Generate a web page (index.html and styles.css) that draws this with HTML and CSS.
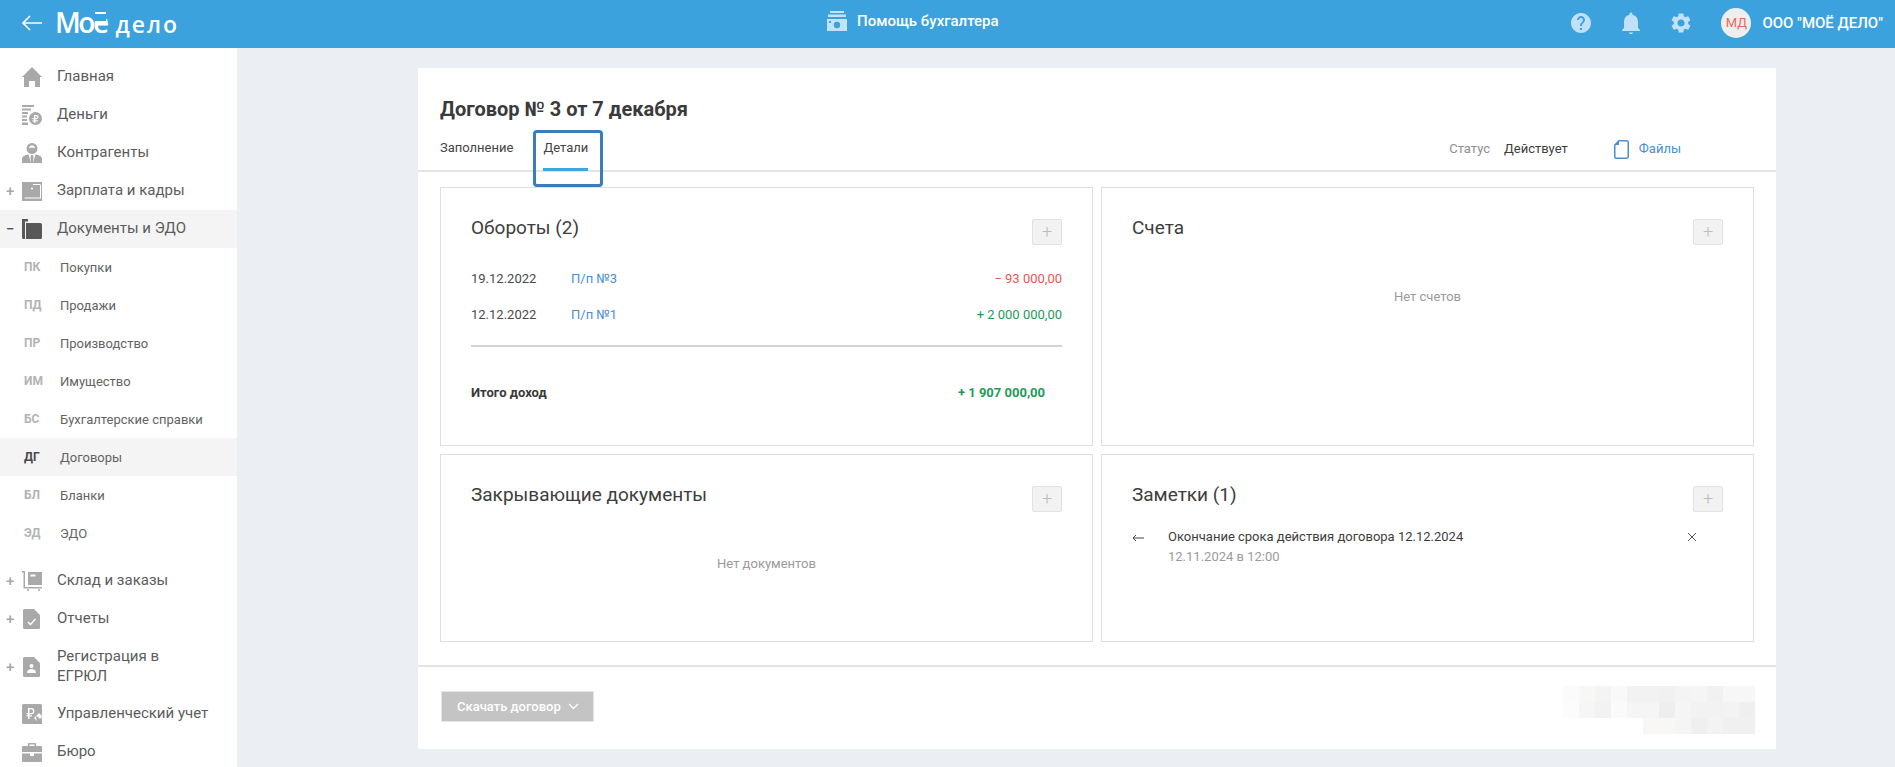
FILE: index.html
```html
<!DOCTYPE html>
<html lang="ru">
<head>
<meta charset="utf-8">
<title>Договор № 3 от 7 декабря</title>
<link rel="stylesheet" href="styles.css">
</head>
<body>
<header class="topbar">
  <div class="brand">
    <svg class="back" viewBox="0 0 20 16"><path d="M8 1 1 8l7 7M1 8h19" fill="none" stroke="#fff" stroke-width="1.6"/></svg>
    <div class="logo"><span class="logo-big">Мо<span class="yo">ё</span></span><span class="logo-small">дело</span></div>
  </div>
  <div class="helper">
    <svg class="helper-icon" viewBox="0 0 20 20"><path d="M3 0h14v2H3zM1 3.500h18V6H1z" fill="#c5e3f7"/><path fill-rule="evenodd" d="M0 8h20v12H0zM10 10.800a3.200 3.200 0 1 0 0 6.400 3.200 3.200 0 0 0 0-6.400zM2 10h2v2H2z" fill="#c5e3f7"/></svg>
    <span>Помощь бухгалтера</span>
  </div>
  <div class="top-right">
    <svg class="top-icon" viewBox="0 0 24 24"><path d="M12 2C6.480 2 2 6.480 2 12s4.480 10 10 10 10-4.480 10-10S17.520 2 12 2zm1 17h-2v-2h2v2zm2.070-7.750l-.9.920C13.450 12.900 13 13.500 13 15h-2v-.5c0-1.100.45-2.100 1.170-2.830l1.240-1.260c.37-.36.59-.86.59-1.410 0-1.100-.9-2-2-2s-2 .9-2 2H8c0-2.210 1.790-4 4-4s4 1.790 4 4c0 .88-.36 1.680-.93 2.250z"/></svg>
    <svg class="top-icon" viewBox="0 0 24 24"><path d="M12 23c1.100 0 2-.4 2-1.500h-4c0 1.100.9 1.500 2 1.500zm7-6v-6c0-3.070-1.630-6.640-5.500-7.320V3c0-.83-.67-1.500-1.500-1.500s-1.500.67-1.500 1.500v.68C6.640 4.360 5 7.920 5 11v6l-2 2v1h18v-1z"/></svg>
    <svg class="top-icon" viewBox="0 0 24 24"><path d="M19.140 12.940c.04-.3.06-.61.06-.94 0-.32-.02-.64-.07-.94l2.030-1.580c.18-.14.23-.41.12-.61l-1.920-3.320c-.12-.22-.37-.29-.59-.22l-2.390.96c-.5-.38-1.030-.7-1.620-.94l-.36-2.540c-.04-.24-.24-.41-.48-.41h-3.840c-.24 0-.43.17-.47.41l-.36 2.540c-.59.24-1.130.57-1.620.94l-2.390-.96c-.22-.08-.47 0-.59.22L2.740 8.870c-.12.21-.08.47.12.61l2.030 1.580c-.05.3-.09.63-.09.94s.02.64.07.94l-2.030 1.580c-.18.14-.23.41-.12.61l1.920 3.320c.12.22.37.29.59.22l2.390-.96c.5.38 1.030.7 1.620.94l.36 2.540c.05.24.24.41.48.41h3.840c.24 0 .44-.17.47-.41l.36-2.540c.59-.24 1.130-.56 1.620-.94l2.390.96c.22.08.47 0 .59-.22l1.920-3.320c.12-.22.07-.47-.12-.61l-2.010-1.580zM12 15.600c-1.980 0-3.600-1.620-3.600-3.600s1.620-3.600 3.600-3.600 3.600 1.620 3.600 3.600-1.620 3.600-3.600 3.600z"/></svg>
    <div class="avatar">МД</div>
    <span class="org">ООО "МОЁ ДЕЛО"</span>
  </div>
</header>

<div class="shell">
  <nav class="sidebar">
    <div class="nav-item"><span class="toggle"></span>
      <svg class="nav-icon" viewBox="0 0 20 20"><path d="M10 0 20 10h-2v10h-5v-6H7v6H2V10H0z"/></svg><span class="nav-label">Главная</span></div>
    <div class="nav-item"><span class="toggle"></span>
      <svg class="nav-icon" viewBox="0 0 20 20"><path d="M0 0h12v2H0zM0 3.500h9v2H0zM0 7h6v2H0zM0 10.500h5v2H0zM0 14h5v2H0zM0 17.500h6V20H0z"/><path fill-rule="evenodd" d="M13.500 7a6.500 6.500 0 1 1 0 13 6.500 6.500 0 0 1 0-13zM12 10v3h-1.500v1.200H12v1h-1.500v1.200H12V18h1.300v-1.600h2.500v-1.200h-2.500v-1h1.200a2.100 2.100 0 0 0 0-4.200zm1.300 1.200h1.200a.9.9 0 0 1 0 1.800h-1.200z"/></svg><span class="nav-label">Деньги</span></div>
    <div class="nav-item"><span class="toggle"></span>
      <svg class="nav-icon" viewBox="0 0 20 20"><path fill-rule="evenodd" d="M10 0a5.500 5.500 0 0 1 5.500 5.500A5.500 5.500 0 0 1 4.500 5.500 5.500 5.500 0 0 1 10 0zM10 2.200a3.300 3.300 0 0 0-3.200 2.600h6.400A3.300 3.300 0 0 0 10 2.200z"/><path d="M0 20v-4c0-2.500 3-4 6.500-4.500L9 20zM20 20v-4c0-2.500-3-4-6.500-4.500L11 20zM9 12h2l.5 2-.5 6H9l-.5-6z"/></svg><span class="nav-label">Контрагенты</span></div>
    <div class="nav-item"><span class="toggle">+</span>
      <svg class="nav-icon" viewBox="0 0 20 20"><path fill-rule="evenodd" d="M0 1h20v19H0zM19 3H11v1h8zM10 6.500a1 1 0 1 0 0 2 1 1 0 0 0 0-2zM18 3.500v13H2.500v1h16.500v-14z"/></svg><span class="nav-label">Зарплата и кадры</span></div>
    <div class="nav-item is-open"><span class="toggle">−</span>
      <svg class="nav-icon" viewBox="0 0 20 20"><path d="M0 0h6v2.500h-3v17.500H1.500A1.500 1.500 0 0 1 0 18.500z"/><path d="M4 4h14.500A1.500 1.500 0 0 1 20 5.500v13a1.500 1.500 0 0 1-1.500 1.500H4z"/></svg><span class="nav-label">Документы и ЭДО</span></div>

    <div class="sub-item"><b>ПК</b><span>Покупки</span></div>
    <div class="sub-item"><b>ПД</b><span>Продажи</span></div>
    <div class="sub-item"><b>ПР</b><span>Производство</span></div>
    <div class="sub-item"><b>ИМ</b><span>Имущество</span></div>
    <div class="sub-item"><b>БС</b><span>Бухгалтерские справки</span></div>
    <div class="sub-item is-active"><b>ДГ</b><span>Договоры</span></div>
    <div class="sub-item"><b>БЛ</b><span>Бланки</span></div>
    <div class="sub-item"><b>ЭД</b><span>ЭДО</span></div>

    <div class="nav-item nav-gap"><span class="toggle">+</span>
      <svg class="nav-icon" viewBox="0 0 20 20"><path d="M0 0h3v16h17v1.500H1.500V1.500H0z"/><path d="M6 1h14v13H6zM8.500 3.500v2h5v-2z" fill-rule="evenodd"/><circle cx="6" cy="19" r="1"/><circle cx="17" cy="19" r="1"/></svg><span class="nav-label">Склад и заказы</span></div>
    <div class="nav-item"><span class="toggle">+</span>
      <svg class="nav-icon" viewBox="0 0 20 20"><path fill-rule="evenodd" d="M2.500 0H12l6 6v12.500a1.500 1.500 0 0 1-1.500 1.500h-14A1.500 1.500 0 0 1 1 18.500v-17A1.500 1.500 0 0 1 2.500 0zM13 9.500l-4.500 5-2-2-1 1 3 3 5.500-6z"/></svg><span class="nav-label">Отчеты</span></div>
    <div class="nav-item nav-tall"><span class="toggle">+</span>
      <svg class="nav-icon" viewBox="0 0 20 20"><path fill-rule="evenodd" d="M2.500 0H12l6 6v12.500a1.500 1.500 0 0 1-1.500 1.500h-14A1.500 1.500 0 0 1 1 18.500v-17A1.500 1.500 0 0 1 2.500 0zM9.500 7a2 2 0 1 0 0 4 2 2 0 0 0 0-4zM5 16c0-3 2-4 4.500-4s4.500 1 4.500 4z"/></svg><span class="nav-label">Регистрация в<br>ЕГРЮЛ</span></div>
    <div class="nav-item"><span class="toggle"></span>
      <svg class="nav-icon" viewBox="0 0 20 20"><path fill-rule="evenodd" d="M1.500 0h17A1.500 1.500 0 0 1 20 1.500v10.500l-3-3-5 5 3 3 3 3H1.500A1.500 1.500 0 0 1 0 18.500v-17A1.500 1.500 0 0 1 1.500 0zM6 4v5H4.500v1.300H6v1H4.500v1.300H6V15h1.500v-2.400H10v-1.300H7.500v-1h1.700a3 3 0 0 0 0-6.300zm1.500 1.300h1.700a1.800 1.800 0 0 1 0 3.700H7.500z"/><path d="m14 13 1-1 3 3 2-2v7h-7l2-2z"/></svg><span class="nav-label">Управленческий учет</span></div>
    <div class="nav-item"><span class="toggle"></span>
      <svg class="nav-icon" viewBox="0 0 20 20"><path fill-rule="evenodd" d="M6 4V2a1 1 0 0 1 1-1h6a1 1 0 0 1 1 1v2h5a1 1 0 0 1 1 1v5H0V5a1 1 0 0 1 1-1zM7.500 4h5V2.500h-5z"/><path d="M0 11.500h8V14h4v-2.500h8V19a1 1 0 0 1-1 1H1a1 1 0 0 1-1-1z"/></svg><span class="nav-label">Бюро</span></div>
  </nav>

  <main class="content">
    <section class="doc">
      <div class="doc-head">
        <h1 class="doc-title">Договор № 3 от 7 декабря</h1>
        <div class="doc-bar">
          <div class="tabs">
            <span class="tab">Заполнение</span>
            <span class="tab tab-active">Детали</span>
          </div>
          <div class="doc-meta">
            <span class="status-label">Статус</span>
            <span class="status-value">Действует</span>
            <span class="files">
              <svg class="files-icon" viewBox="0 0 15 19"><path d="M5 .75h7.500a1.750 1.750 0 0 1 1.750 1.750v14a1.750 1.750 0 0 1-1.750 1.750h-10A1.750 1.750 0 0 1 .75 16.500V5z" fill="none" stroke="#4a8ed2" stroke-width="1.500"/><path d="M5 .75V5H.75z" fill="#4a8ed2"/></svg>
              <span>Файлы</span>
            </span>
          </div>
        </div>
      </div>

      <div class="cards">
        <article class="card card-tall">
          <div class="card-head"><h2>Обороты (2)</h2><span class="add">+</span></div>
          <div class="turn-row"><span class="turn-date">19.12.2022</span><a class="turn-link">П/п №3</a><span class="sum sum-minus">− 93 000,00</span></div>
          <div class="turn-row"><span class="turn-date">12.12.2022</span><a class="turn-link">П/п №1</a><span class="sum sum-plus">+ 2 000 000,00</span></div>
          <div class="turn-total"><b>Итого доход</b><b class="sum-plus">+ 1 907 000,00</b></div>
        </article>
        <article class="card card-tall">
          <div class="card-head"><h2>Счета</h2><span class="add">+</span></div>
          <p class="empty">Нет счетов</p>
        </article>
        <article class="card">
          <div class="card-head"><h2>Закрывающие документы</h2><span class="add">+</span></div>
          <p class="empty">Нет документов</p>
        </article>
        <article class="card">
          <div class="card-head"><h2>Заметки (1)</h2><span class="add">+</span></div>
          <div class="note">
            <svg class="note-arrow" viewBox="0 0 12 8"><path d="M4 1 1 4l3 3M1 4h11" fill="none" stroke="#444" stroke-width="1"/></svg>
            <div class="note-body">
              <div class="note-text">Окончание срока действия договора 12.12.2024</div>
              <div class="note-date">12.11.2024 в 12:00</div>
            </div>
            <svg class="note-close" viewBox="0 0 10 10"><path d="M1 1l8 8M9 1 1 9" stroke="#555" stroke-width="1"/></svg>
          </div>
        </article>
      </div>

      <div class="doc-foot">
        <button class="download"><span>Скачать договор</span>
          <svg class="chev" viewBox="0 0 11 7"><path d="m1 1 4.500 4.500L10 1" fill="none" stroke="#fff" stroke-width="1.300"/></svg>
        </button>
        <svg class="blur" viewBox="0 0 192 48">
          <rect x="0" y="0" width="16" height="16" fill="#fbfbfb"/><rect x="16" y="0" width="16" height="16" fill="#f7f7f5"/><rect x="32" y="0" width="16" height="16" fill="#f4f4f4"/><rect x="48" y="0" width="16" height="16" fill="#f9f9f9"/><rect x="64" y="0" width="32" height="16" fill="#f2f2f2"/><rect x="96" y="0" width="16" height="16" fill="#f1f1f1"/><rect x="112" y="0" width="16" height="16" fill="#f4f4f4"/><rect x="128" y="0" width="16" height="16" fill="#f5f5f5"/><rect x="144" y="0" width="16" height="16" fill="#f1f1f1"/><rect x="160" y="0" width="32" height="16" fill="#f6f7f6"/>
          <rect x="0" y="16" width="16" height="16" fill="#fcfcfc"/><rect x="16" y="16" width="16" height="16" fill="#f6f6f6"/><rect x="32" y="16" width="16" height="16" fill="#f2f2f2"/><rect x="48" y="16" width="16" height="16" fill="#fafafa"/><rect x="64" y="16" width="32" height="16" fill="#f5f5f5"/><rect x="96" y="16" width="16" height="16" fill="#eeeeee"/><rect x="112" y="16" width="16" height="16" fill="#f5f5f5"/><rect x="128" y="16" width="32" height="16" fill="#f2f2f2"/><rect x="160" y="16" width="16" height="16" fill="#f3f3f3"/><rect x="176" y="16" width="16" height="16" fill="#efefef"/>
          <rect x="80" y="32" width="16" height="16" fill="#f8f7f5"/><rect x="96" y="32" width="16" height="16" fill="#f7f7f6"/><rect x="112" y="32" width="16" height="16" fill="#f4f5f4"/><rect x="128" y="32" width="16" height="16" fill="#efefef"/><rect x="144" y="32" width="16" height="16" fill="#f3f3f3"/><rect x="160" y="32" width="16" height="16" fill="#f0f0f0"/><rect x="176" y="32" width="16" height="16" fill="#eff0ef"/>
        </svg>
      </div>
    </section>
  </main>
</div>
</body>
</html>
```

FILE: styles.css
```css
* { box-sizing: border-box; }
html, body { height: 100%; }
body {
  margin: 0;
  height: 767px;
  overflow: hidden;
  background: #ebeff3;
  color: #3a3a3a;
  font-family: Roboto, "Liberation Sans", sans-serif;
  font-size: 14px;
}

/* top bar */
.topbar {
  position: relative;
  display: flex;
  align-items: center;
  justify-content: space-between;
  height: 48px;
  padding-bottom: 2px;
  background: #3ca2de;
  color: #fff;
}
.brand { display: flex; align-items: center; padding-left: 22px; }
.back { width: 20px; height: 16px; margin-right: 13px; }
.logo {
  display: flex;
  align-items: baseline;
  gap: 9px;
  font-family: "Open Sans", Roboto, sans-serif;
  color: #fff;
  white-space: nowrap;
  line-height: 46px;
}
.logo-big { font-size: 28px; font-weight: 600; letter-spacing: -2.500px; }
.logo-small { font-size: 23px; font-weight: 600; letter-spacing: 2px; }
.yo { position: relative; }
.yo::before {
  content: "";
  position: absolute;
  left: 2px;
  right: 1px;
  top: 9px;
  height: 7px;
  border-top: 2px solid #fff;
  border-bottom: 2px solid #fff;
  background: #3ca2de;
}
.helper {
  position: absolute;
  left: 827px;
  top: 10px;
  display: flex;
  align-items: center;
  gap: 10px;
  font-size: 15px;
  font-weight: 500;
  line-height: 22px;
}
.helper-icon { width: 20px; height: 20px; }
.top-right { display: flex; align-items: center; padding-right: 12px; }
.top-icon { width: 24px; height: 24px; fill: #c0e1f7; margin-right: 26px; }
.top-icon:nth-child(3) { margin-right: 28px; }
.avatar {
  width: 30px;
  height: 30px;
  border-radius: 50%;
  background: #eeeeee;
  color: #e96a5c;
  font-size: 13px;
  text-align: center;
  line-height: 30px;
  margin-right: 11px;
}
.org { font-size: 15px; font-weight: 500; white-space: nowrap; }

/* sidebar */
.shell { display: flex; height: 719px; }
.sidebar {
  flex: 0 0 237px;
  height: 719px;
  overflow: hidden;
  background: #fff;
  padding-top: 10px;
}
.nav-item {
  display: flex;
  align-items: center;
  height: 38px;
  color: #5c5c5c;
  font-size: 15px;
  line-height: 20px;
}
.nav-label { margin-bottom: 2px; }
.nav-item.is-open { background: #f4f4f4; }
.nav-item.is-open .nav-icon { fill: #585858; }
.nav-item.is-open .toggle { color: #555; }
.nav-gap { margin-top: 10px; }
.nav-tall { height: 57px; }
.toggle {
  flex: 0 0 22px;
  padding-left: 6px;
  color: #a8a8a8;
  font-size: 15px;
  font-weight: 500;
}
.nav-icon {
  flex: 0 0 20px;
  width: 20px;
  height: 20px;
  margin-right: 15px;
  fill: #a9a9a9;
}
.sub-item {
  display: flex;
  align-items: center;
  height: 38px;
  padding-left: 24px;
  color: #636363;
  font-size: 13px;
}
.sub-item b {
  flex: 0 0 36px;
  color: #b3b3b3;
  font-size: 12px;
  font-weight: 700;
}
.sub-item.is-active { background: #f4f4f4; }
.sub-item.is-active b { color: #4a4a4a; }

/* document */
.content { flex: 1; padding: 20px 119px 18px 181px; }
.doc {
  display: flex;
  flex-direction: column;
  height: 681px;
  background: #fff;
}
.doc-head {
  height: 104px;
  border-bottom: 2px solid #e4e4e4;
  padding: 29px 22px 0;
}
.doc-title {
  margin: 0;
  font-size: 20px;
  font-weight: 700;
  line-height: 24px;
  color: #3a3a3a;
}
.doc-bar { display: flex; justify-content: space-between; margin-top: 16px; }
.tabs { display: flex; gap: 30px; }
.tab { position: relative; font-size: 13px; line-height: 20px; color: #444; padding-top: 1px; }
.tab-active::after {
  content: "";
  position: absolute;
  left: 0;
  right: 0;
  top: 31px;
  height: 3px;
  background: #3ea7e2;
}
.tab-active::before {
  content: "";
  position: absolute;
  left: -10px;
  right: -15px;
  top: -7px;
  height: 51px;
  border: 3px solid #3b7cbd;
  border-radius: 4px;
}
.doc-meta {
  display: flex;
  align-items: flex-start;
  font-size: 13px;
  line-height: 20px;
  padding-top: 2px;
  margin-right: 73px;
}
.status-label { color: #8e8e8e; margin-right: 14px; }
.status-value { color: #3d3d3d; margin-right: 46px; }
.files { display: flex; align-items: center; gap: 10px; color: #4a8ed2; height: 22px; margin-top: -1px; }
.files-icon { width: 15px; height: 19px; }

.cards {
  display: grid;
  grid-template-columns: 653px 653px;
  grid-template-rows: 259px 188px;
  gap: 8px;
  padding: 15px 22px 0;
}
.card {
  border: 1px solid #dedede;
  padding: 31px 30px 0;
}
.card-head {
  display: flex;
  justify-content: space-between;
  align-items: flex-start;
}
.card h2 {
  margin: -3px 0 0;
  font-size: 19px;
  font-weight: 400;
  line-height: 24px;
  color: #3d3d3d;
}
.add {
  width: 30px;
  height: 26px;
  border: 1px solid #e2e2e2;
  border-radius: 2px;
  background: #f2f2f2;
  color: #bdbdbd;
  font-size: 18px;
  font-weight: 300;
  line-height: 24px;
  text-align: center;
}
.empty {
  margin: 42px 0 0;
  text-align: center;
  font-size: 13px;
  color: #9a9a9a;
  line-height: 20px;
}
.turn-row {
  display: flex;
  align-items: center;
  height: 36px;
  font-size: 13px;
  color: #4a4a4a;
}
.turn-row:nth-child(2) { margin-top: 15px; }
.turn-date { flex: 0 0 100px; }
.turn-link { color: #4a8ed2; }
.sum { margin-left: auto; }
.sum-minus { color: #ef5350; }
.sum-plus { color: #1e9b5a; }
.turn-total {
  display: flex;
  justify-content: space-between;
  margin-top: 13px;
  padding: 36px 17px 0 0;
  border-top: 2px solid #d3d3d3;
  font-size: 13px;
  line-height: 20px;
}
.turn-total b { font-weight: 700; }
.note {
  display: flex;
  align-items: flex-start;
  margin-top: 15px;
  padding-right: 26px;
}
.note-arrow { flex: 0 0 12px; width: 12px; height: 8px; margin: 7px 24px 0 0; }
.note-body { flex: 1; }
.note-text { font-size: 13px; line-height: 20px; color: #3d3d3d; }
.note-date { font-size: 13px; line-height: 20px; color: #9a9a9a; }
.note-close { flex: 0 0 10px; width: 10px; height: 10px; margin-top: 5px; }

.doc-foot {
  position: relative;
  flex: 1;
  margin-top: 23px;
  border-top: 2px solid #e4e4e4;
  display: flex;
  justify-content: space-between;
  align-items: flex-start;
  padding: 20px 21px 0 23px;
}
.download {
  display: flex;
  align-items: center;
  gap: 7px;
  width: 153px;
  height: 31px;
  margin-top: 4px;
  padding: 0 15px;
  border: 1px solid #e6e6e6;
  background: #c4c4c4;
  color: #fff;
  font: 500 13px Roboto, sans-serif;
  white-space: nowrap;
}
.chev { flex: 0 0 11px; width: 11px; height: 7px; }
.blur { width: 192px; height: 48px; margin-top: -1px; }
```
